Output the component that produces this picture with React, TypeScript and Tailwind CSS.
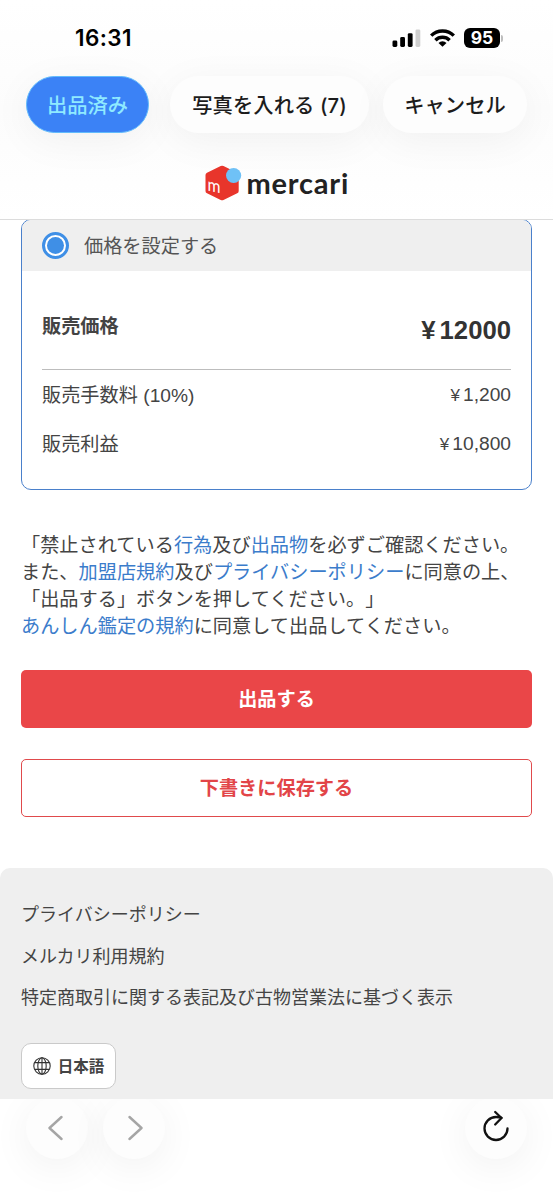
import React from 'react';

const footerLinks = [
  'プライバシーポリシー',
  'メルカリ利用規約',
  '特定商取引に関する表記及び古物営業法に基づく表示',
];

const fees = [
  { label: '販売手数料 (10%)', value: '1,200' },
  { label: '販売利益', value: '10,800' },
];

const StatusBar: React.FC = () => (
  <div className="flex h-[76px] items-center justify-between pl-[75px] pr-[50px]">
    <span className="font-['Inter',sans-serif] text-[22.5px] font-semibold leading-none tracking-[0.4px] text-black">
      16:31
    </span>
    <div className="flex items-center">
      <svg width="30" height="18" viewBox="0 0 30 18" className="mr-[8px]">
        <rect x="0.5" y="11.5" width="4.8" height="6.5" rx="1.4" fill="#000" />
        <rect x="8.2" y="8" width="4.8" height="10" rx="1.4" fill="#000" />
        <rect x="15.8" y="4.2" width="4.8" height="13.8" rx="1.4" fill="#000" />
        <rect x="23.5" y="0.4" width="4.8" height="17.6" rx="1.4" fill="#cfcfcf" />
      </svg>
      <svg width="25" height="18" viewBox="0 0 25 18" className="mr-[9px]">
        <g fill="none" stroke="#000" strokeWidth="3.4">
          <path d="M1.2 6.6a16 16 0 0 1 22.6 0" />
          <path d="M5.4 11.2a10 10 0 0 1 14.2 0" />
        </g>
        <path d="M12.5 17.8L8.5 13.9a5.6 5.6 0 0 1 8 0Z" fill="#000" />
      </svg>
      <div className="flex h-[20px] w-[36px] items-center justify-center rounded-[6px] bg-black font-['Inter',sans-serif] text-[17.5px] font-bold leading-none text-white">
        95
      </div>
      <div className="ml-px h-[7px] w-[2px] rounded-r-full bg-[#bdbdbd]" />
    </div>
  </div>
);

const Logo: React.FC = () => (
  <div className="flex items-center gap-[5px]">
    <svg width="37" height="36" viewBox="0 0 37 36">
      <path
        d="M15.7 1a3 3 0 0 1 2.8 0L32.2 7.7a2.6 2.6 0 0 1 1.5 2.4v15.8a2.6 2.6 0 0 1-1.5 2.4L18.5 35a3 3 0 0 1-2.8 0L2 28.3a2.6 2.6 0 0 1-1.500-2.400V10.100A2.600 2.600 0 0 1 2 7.700Z"
        fill="#e8352b"
      />
      <circle cx="28.6" cy="10.5" r="7.6" fill="#6fc1f6" />
      <text
        x="2.5"
        y="25.5"
        fill="#fff"
        fontSize="18"
        fontWeight="400"
        fontFamily="Lato, sans-serif"
        textLength="13"
        lengthAdjust="spacingAndGlyphs"
        transform="skewY(12) translate(0 -0.5)"
      >
        m
      </text>
    </svg>
    <span className="w-[102px] whitespace-nowrap font-['Lato',sans-serif] text-[29px] font-bold leading-[36px] tracking-[0.8px] text-[#222]">
      mercari
    </span>
  </div>
);

const Header: React.FC = () => (
  <header className="flex h-[220px] shrink-0 flex-col border-b border-[#dcdcdc] bg-linear-to-b from-white via-[#fcfcfc] to-white">
    <StatusBar />
    <div className="flex h-[57px] shrink-0 pl-[26px] font-['Inter','Noto_Sans_CJK_JP',sans-serif] text-[20.3px] font-medium text-[#1c1c1c]">
      <button className="w-[123px] rounded-full border border-[#62bbfc] bg-[#3b82f6] pt-[3px] text-[#8feaff] shadow-[0_8px_40px_rgba(0,0,0,0.05)]">
        出品済み
      </button>
      <button className="ml-[21px] w-[199px] whitespace-nowrap rounded-full bg-[#fdfdfd] pt-[3px] tracking-[0.1px] shadow-[0_8px_40px_rgba(0,0,0,0.05)]">
        写真を入れる (7)
      </button>
      <button className="ml-[14px] w-[144px] rounded-full bg-[#fdfdfd] pt-[3px] shadow-[0_8px_40px_rgba(0,0,0,0.05)]">
        キャンセル
      </button>
    </div>
    <div className="flex flex-1 items-start justify-center pt-[32px]">
      <Logo />
    </div>
  </header>
);

const PriceCard: React.FC = () => (
  <section className="-mt-px h-[271px] overflow-hidden rounded-[10px] border-[1.5px] border-[#4a80cb]">
    <div className="flex h-[51px] items-center bg-[#efefef] pl-[20px]">
      <span className="flex size-[27px] items-center justify-center rounded-full border-[3px] border-[#3f8fe6] bg-white">
        <span className="size-[17px] rounded-full bg-[#3f8fe6]" />
      </span>
      <span className="ml-[15px] pt-[3px] text-[#555]">価格を設定する</span>
    </div>
    <div className="px-[20px]">
      <div className="flex h-[99px] items-center justify-between border-b border-[#bdbdbd] pt-[10px]">
        <span className="pt-[5px] font-bold">販売価格</span>
        <span className="flex items-baseline pt-[10px] text-[25.7px] font-bold text-[#333]">
          <span className="mr-[4px]">¥</span>12000
        </span>
      </div>
      {fees.map((fee) => (
        <div key={fee.label} className="flex h-[49px] items-center justify-between">
          <span className="pt-[3px]">{fee.label}</span>
          <span className="flex items-baseline pt-[2px]">
            <span className="mr-[3px] text-[17px]">¥</span>
            {fee.value}
          </span>
        </div>
      ))}
    </div>
  </section>
);

const TermLink: React.FC<{ children: React.ReactNode }> = ({ children }) => (
  <a className="text-[#3b7ccb]">{children}</a>
);

const GlobeIcon: React.FC = () => (
  <svg width="18" height="18" viewBox="0 0 18 18" fill="none" stroke="#333" strokeWidth="1.1">
    <circle cx="9" cy="9" r="8.2" />
    <ellipse cx="9" cy="9" rx="4.2" ry="8.2" />
    <path d="M9 .8v16.4M1.7 5.6h14.6M1.7 12.4h14.6" />
  </svg>
);

const Footer: React.FC = () => (
  <footer className="h-[231px] shrink-0 rounded-t-[10px] bg-[#efefef] pl-[21px] pt-[27px] text-[18px]">
    <ul>
      {footerLinks.map((link) => (
        <li key={link} className="flex h-[41.5px] items-center">
          {link}
        </li>
      ))}
    </ul>
    <button className="mt-[23px] flex h-[46px] w-[95px] items-center justify-center gap-[7px] rounded-[10px] border-[1.5px] border-[#cacaca] bg-white text-[15.5px] font-bold">
      <GlobeIcon />
      <span className="pt-[2px]">日本語</span>
    </button>
  </footer>
);

const NavBar: React.FC = () => (
  <nav className="flex h-[101px] shrink-0 overflow-hidden bg-white pl-[26px]">
    <button className="-mt-[2px] flex size-[62px] items-center justify-center rounded-full bg-[#fdfdfd] shadow-[0_8px_40px_rgba(0,0,0,0.06)]">
      <svg width="18" height="26" viewBox="0 0 18 26" fill="none" stroke="#a5a5a5" strokeWidth="2.4" strokeLinecap="round" strokeLinejoin="round">
        <path d="M13.5 2L1.5 13l12 11" />
      </svg>
    </button>
    <button className="-mt-[2px] ml-[15px] flex size-[62px] items-center justify-center rounded-full bg-[#fdfdfd] shadow-[0_8px_40px_rgba(0,0,0,0.06)]">
      <svg width="18" height="26" viewBox="0 0 18 26" fill="none" stroke="#a5a5a5" strokeWidth="2.4" strokeLinecap="round" strokeLinejoin="round">
        <path d="M4.500 2l12 11-12 11" />
      </svg>
    </button>
    <button className="-mt-[2px] ml-[300px] flex size-[62px] items-center justify-center rounded-full bg-[#fdfdfd] pb-[4px] shadow-[0_8px_40px_rgba(0,0,0,0.06)]">
      <svg width="28" height="32" viewBox="0 0 28 32" fill="none" stroke="#111" strokeWidth="2.3" strokeLinecap="round" strokeLinejoin="round">
        <path d="M19.5 7.8C18 7.2 16 7 14 7A11.500 11.500 0 1 0 25.500 18.500" />
        <path d="M13.2 2l6.300 6-6.300 6.500" />
      </svg>
    </button>
  </nav>
);

export default function App() {
  return (
    <div className="flex h-[1200px] w-[553px] flex-col overflow-hidden bg-white font-['Liberation_Sans','Noto_Sans_CJK_JP',sans-serif] text-[19.2px] text-[#444] [text-spacing-trim:space-all]">
      <Header />
      <main className="h-[648px] shrink-0 overflow-hidden px-[21px]">
        <PriceCard />
        <p className="mt-[42px] whitespace-nowrap leading-[27px]">
          「禁止されている<TermLink>行為</TermLink>及び<TermLink>出品物</TermLink>を必ずご確認ください。
          <br />
          また、<TermLink>加盟店規約</TermLink>及び<TermLink>プライバシーポリシー</TermLink>に同意の上、
          <br />
          「出品する」ボタンを押してください。」
          <br />
          <TermLink>あんしん鑑定の規約</TermLink>に同意して出品してください。
        </p>
        <button className="mt-[30px] block h-[58px] w-full rounded-[5px] bg-[#ea4648] pt-[2px] font-bold text-white">
          出品する
        </button>
        <button className="mt-[31px] block h-[58px] w-full rounded-[5px] border-[1.5px] border-[#e04a4c] bg-white pt-[2px] font-bold text-[#e24548]">
          下書きに保存する
        </button>
      </main>
      <Footer />
      <NavBar />
    </div>
  );
}
